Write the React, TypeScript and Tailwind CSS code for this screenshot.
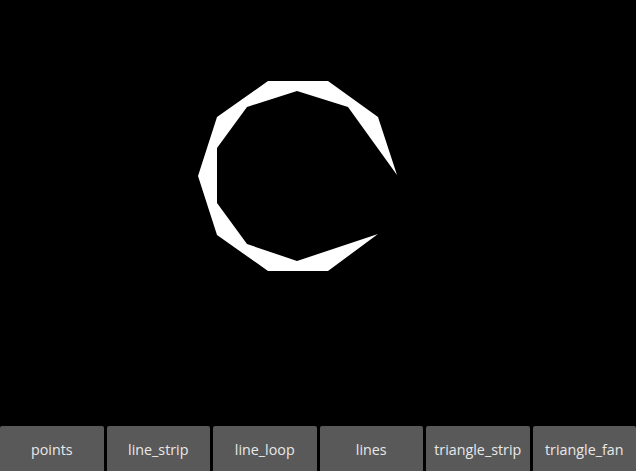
import React from "react";

const outer: [number, number][] = [
  [397, 175],
  [378, 117],
  [328, 81],
  [268, 81],
  [217, 117],
  [198, 176],
  [217, 235],
  [268, 271],
  [328, 271],
  [378, 234],
];
const inner: [number, number][] = [
  [297, 261],
  [247, 244],
  [217, 203],
  [217, 148],
  [247, 107],
  [297, 91],
  [348, 107],
];

const pts = [...outer, ...inner].map(([x, y]) => `${x},${y}`).join(" ");

const labels = ["points", "line_strip", "line_loop", "lines", "triangle_strip", "triangle_fan"];

export default function App() {
  return (
    <div className="w-[636px] h-[471px] bg-black flex flex-col overflow-hidden" style={{ fontFamily: '"Open Sans", "DejaVu Sans", sans-serif' }}>
      <div className="h-[426px] relative">
        <svg width="636" height="426" className="block">
          <polygon points={pts} fill="#ffffff" />
        </svg>
      </div>
      <div className="flex gap-[3px] h-[45px]">
        {labels.map((l) => (
          <div
            key={l}
            className="flex-1 bg-[#595959] rounded-t-[2px] flex items-center justify-center pt-[3px] text-[14.3px] text-[#e8e8e8]"
          >
            {l}
          </div>
        ))}
      </div>
    </div>
  );
}
